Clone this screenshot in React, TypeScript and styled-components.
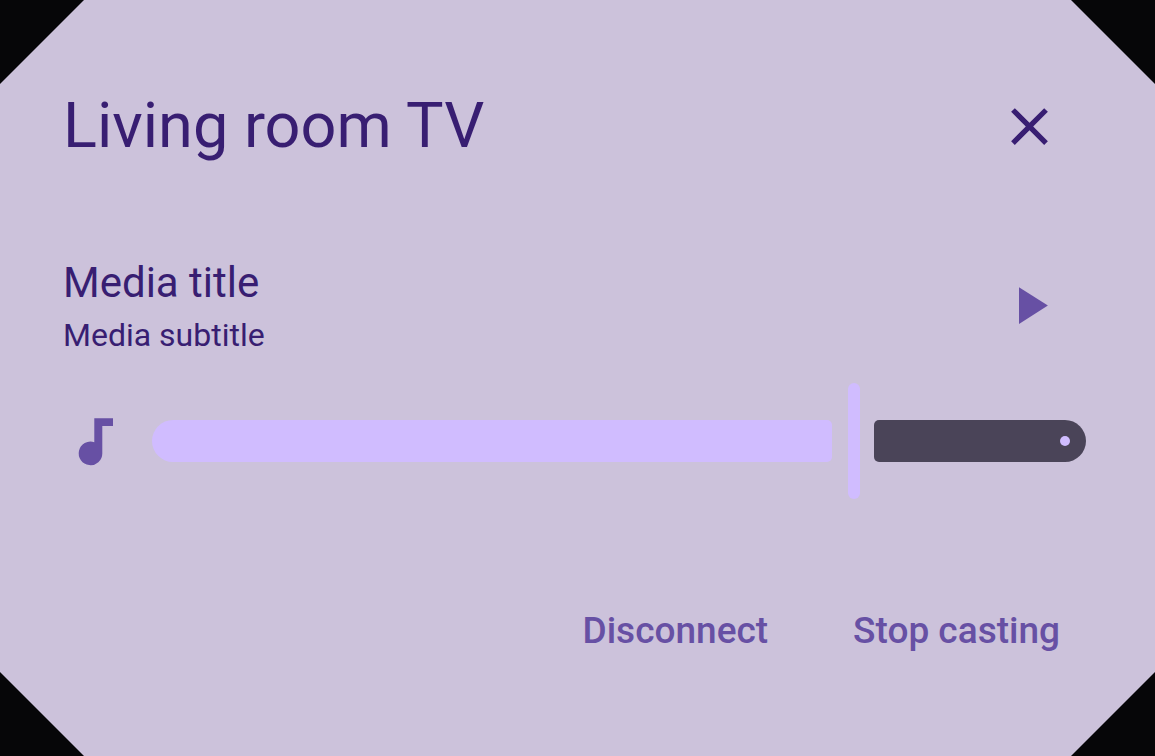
import { useState } from "react";
import styled, { createGlobalStyle } from "styled-components";

const color = {
  backdrop: "#060608",
  surface: "#ccc2db",
  text: "#381e72",
  primary: "#6750a4",
  active: "#d0bcff",
  inactive: "#4a4458",
};

const GlobalStyle = createGlobalStyle`
  *, *::before, *::after { box-sizing: border-box; }
  body {
    margin: 0;
    background: ${color.backdrop};
    font-family: Roboto, "Liberation Sans", sans-serif;
  }
`;

const Dialog = styled.main`
  display: flex;
  flex-direction: column;
  min-height: 100vh;
  padding: 63px;
  background: ${color.surface};
  color: ${color.text};
  clip-path: polygon(
    84px 0,
    calc(100% - 84px) 0,
    100% 84px,
    100% calc(100% - 84px),
    calc(100% - 84px) 100%,
    84px 100%,
    0 calc(100% - 84px),
    0 84px
  );
`;

const Row = styled.div`
  display: flex;
  align-items: center;
  justify-content: space-between;
`;

const MediaRow = styled(Row)`
  margin-top: 53px;
`;

const VolumeRow = styled(Row)`
  gap: 26px;
  margin-top: 15px;
  padding-right: 6px;
`;

const Actions = styled.div`
  display: flex;
  justify-content: flex-end;
  gap: 21px;
  margin-top: 79px;
`;

const Title = styled.h1`
  margin: 0;
  font-size: 63px;
  font-weight: 400;
  line-height: 84px;
`;

const MediaTitle = styled.h2`
  margin: 0;
  font-size: 42px;
  font-weight: 400;
  line-height: 60px;
`;

const MediaSubtitle = styled.p`
  margin: 0;
  font-size: 32px;
  line-height: 44px;
`;

const IconButton = styled.button<{ $tone: string }>`
  display: grid;
  flex: none;
  place-items: center;
  width: 126px;
  height: 126px;
  padding: 0;
  border: 0;
  border-radius: 50%;
  background: none;
  color: ${(p) => p.$tone};
  cursor: pointer;
`;

const Icon = styled.svg`
  display: block;
  flex: none;
  width: 63px;
  height: 63px;
  fill: currentColor;
`;

const NoteIcon = styled(Icon)`
  color: ${color.primary};
`;

const TextButton = styled.button`
  height: 105px;
  padding: 0 32px;
  border: 0;
  border-radius: 53px;
  background: none;
  color: ${color.primary};
  font-family: inherit;
  font-size: 37px;
  font-weight: 500;
  line-height: 53px;
  cursor: pointer;
`;

const Slider = styled.label`
  position: relative;
  display: flex;
  flex: 1;
  align-items: center;
  height: 116px;
`;

const ActiveTrack = styled.span`
  flex-basis: 0;
  height: 42px;
  border-radius: 21px 5px 5px 21px;
  background: ${color.active};
`;

const Handle = styled.span`
  flex: none;
  width: 12px;
  height: 116px;
  margin: 0 14px 0 16px;
  border-radius: 6px;
  background: ${color.active};
`;

const InactiveTrack = styled.span`
  display: flex;
  flex-basis: 0;
  align-items: center;
  justify-content: flex-end;
  height: 42px;
  border-radius: 5px 21px 21px 5px;
  background: ${color.inactive};
`;

const StopDot = styled.span`
  width: 10px;
  height: 10px;
  margin-right: 16px;
  border-radius: 50%;
  background: ${color.active};
`;

const RangeInput = styled.input`
  position: absolute;
  inset: 0;
  width: 100%;
  height: 100%;
  margin: 0;
  opacity: 0;
  cursor: pointer;
`;

const MAX_VOLUME = 21;

function VolumeSlider() {
  const [volume, setVolume] = useState(16);
  return (
    <Slider>
      <ActiveTrack style={{ flexGrow: volume }} />
      <Handle />
      <InactiveTrack style={{ flexGrow: MAX_VOLUME - volume }}>
        <StopDot />
      </InactiveTrack>
      <RangeInput
        type="range"
        aria-label="Volume"
        min={1}
        max={MAX_VOLUME - 1}
        value={volume}
        onChange={(e) => setVolume(Number(e.target.value))}
      />
    </Slider>
  );
}

export default function App() {
  return (
    <>
      <GlobalStyle />
      <Dialog>
        <Row>
          <Title>Living room TV</Title>
          <IconButton type="button" aria-label="Close" $tone={color.text}>
            <Icon viewBox="0 0 24 24" aria-hidden="true">
              <path d="M19 6.41 17.59 5 12 10.59 6.41 5 5 6.41 10.59 12 5 17.59 6.41 19 12 13.41 17.59 19 19 17.59 13.41 12z" />
            </Icon>
          </IconButton>
        </Row>
        <MediaRow>
          <div>
            <MediaTitle>Media title</MediaTitle>
            <MediaSubtitle>Media subtitle</MediaSubtitle>
          </div>
          <IconButton type="button" aria-label="Play" $tone={color.primary}>
            <Icon viewBox="0 0 24 24" aria-hidden="true">
              <path d="M8 5v14l11-7z" />
            </Icon>
          </IconButton>
        </MediaRow>
        <VolumeRow>
          <NoteIcon viewBox="0 0 63 63" aria-hidden="true">
            <path d="M31.3 8.2H50V16H39.3V43.4A11.8 11.8 0 1 1 31.3 32.2Z" />
          </NoteIcon>
          <VolumeSlider />
        </VolumeRow>
        <Actions>
          <TextButton type="button">Disconnect</TextButton>
          <TextButton type="button">Stop casting</TextButton>
        </Actions>
      </Dialog>
    </>
  );
}
